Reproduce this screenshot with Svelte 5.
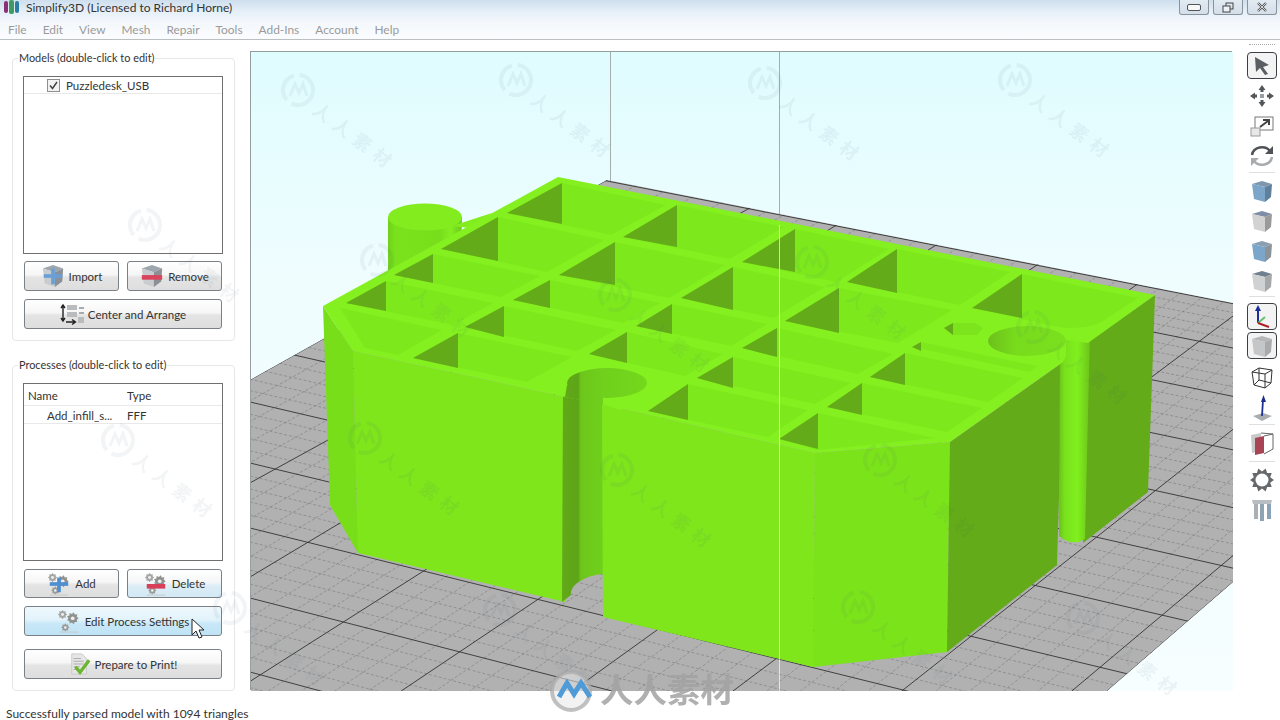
<script>
	const menus = ['File', 'Edit', 'View', 'Mesh', 'Repair', 'Tools', 'Add-Ins', 'Account', 'Help'];

	// floor grid, both families are straight lines in screen coordinates
	const yLeft = [111, 151, 195, 243, 291, 345, 402, 463, 528, 598, 672, 750];
	const yRight = [288, 332, 380, 433, 490, 550, 613, 680, 752, 830, 915, 1000];
	const fam = [[607, 180, -0.56], [328, 440, -0.55], [340, 523, -0.6], [422, 572, -0.636], [537, 600, -0.67], [657, 630, -0.72], [777, 658, -0.75], [903, 690, -0.79], [1073, 690, -0.84], [1107, 691, -0.865]];
	const xAt = (f, y) => f[0] + (y - f[1]) / f[2];

	const lerp = (a, b, t) => a + (b - a) * t;
	const majors = [];
	const minors = [];
	const yAt = (a, b, x) => a + (b - a) * (x - 250) / 903;
	yLeft.forEach((a, i) => {
		const b = yRight[i];
		majors.push([250, yAt(a, b, 250), 1233, yAt(a, b, 1233)]);
		if (i < yLeft.length - 1) {
			for (let k = 1; k < 5; k++) {
				const t = k / 5;
				const a2 = lerp(a, yLeft[i + 1], t);
				const b2 = lerp(b, yRight[i + 1], t);
				minors.push([250, yAt(a2, b2, 250), 1233, yAt(a2, b2, 1233)]);
			}
		}
	});
	fam.forEach((f, i) => {
		majors.push([xAt(f, 100), 100, xAt(f, 691), 691]);
		if (i < fam.length - 2) {
			const n = fam[i + 1];
			for (let k = 1; k < 5; k++) {
				const t = k / 5;
				minors.push([lerp(xAt(f, 100), xAt(n, 100), t), 100, lerp(xAt(f, 691), xAt(n, 691), t), 691]);
			}
		}
	});

	// pockets: left x, left y, top x, top y, bottom y of the dark wall, then the width vector
	const pockets = [
		[507, 213, 562, 183, 224, 104, 22], [623, 237, 677, 205, 247, 107, 22], [742, 262, 795, 229, 272, 94, 20], [847, 282, 897, 249, 293, 113, 23],
		[441, 249, 498, 217, 261, 106, 23], [559, 275, 615, 242, 285, 110, 23], [681, 298, 733, 267, 310, 92, 20], [785, 321, 839, 288, 333, 113, 22],
		[394, 275, 433, 254, 283, 107, 22], [513, 300, 550, 280, 308, 110, 23], [636, 326, 672, 304, 334, 95, 20], [742, 348, 777, 328, 357, 116, 26], [870, 377, 905, 353, 385, 118, 25],
		[346, 303, 386, 281, 311, 107, 22], [465, 327, 504, 306, 337, 112, 24], [589, 354, 627, 332, 363, 96, 22], [697, 378, 733, 357, 388, 118, 26], [827, 407, 862, 383, 415, 120, 25],
		[413, 358, 458, 333, 368, 114, 24], [648, 411, 688, 384, 420, 120, 26]
	];

	const marks = [
		[298, 90], [516, 80], [765, 83], [1015, 80], [145, 225], [377, 260], [615, 295], [812, 262], [1033, 327],
		[118, 440], [365, 438], [617, 470], [880, 460], [230, 608], [500, 610], [858, 607], [1083, 618]
	];

	function gear(cx, cy, r, teeth) {
		const pts = [];
		const step = Math.PI / teeth;
		for (let i = 0; i < teeth * 2; i++) {
			const rad = i % 2 ? r * 0.72 : r;
			pts.push((cx + Math.cos(i * step) * rad).toFixed(1) + ',' + (cy + Math.sin(i * step) * rad).toFixed(1));
		}
		return pts.join(' ');
	}
</script>

{#snippet cube(top, left, right)}
	<svg class="tool-icon" width="24" height="24" viewBox="0 0 24 24">
		<polygon points="2,5 12,2 22,5 15,8" fill={top} />
		<polygon points="2,5 15,8 15,23 4,20" fill={left} />
		<polygon points="15,8 22,5 21,18 15,23" fill={right} />
	</svg>
{/snippet}

{#snippet boxIcon(mark)}
	<svg width="24" height="26" viewBox="0 0 26 26">
		<polygon points="2,5 13,1 24,5 15,9" fill="#9ea6ad" />
		<polygon points="2,5 15,9 15,25 4,21" fill="#c9cdd0" />
		<polygon points="15,9 24,5 23,19 15,25" fill="#8b9096" />
		{#if mark === 'plus'}
			<rect x="3" y="11" width="20" height="4" fill="#6a9fd6" />
			<rect x="11" y="5" width="4" height="17" fill="#6a9fd6" />
		{:else}
			<rect x="2" y="12" width="22" height="5" fill="#d8455c" />
		{/if}
	</svg>
{/snippet}

{#snippet gears(mark)}
	<svg width="24" height="26" viewBox="0 0 26 26">
		<polygon points={gear(6, 6, 5, 8)} fill="#a3a5a3" />
		<circle cx="6" cy="6" r="1.6" fill="#eee" />
		<polygon points={gear(17, 10, 6.5, 9)} fill="#8f928f" />
		<circle cx="17" cy="10" r="2" fill="#eee" />
		<polygon points={gear(9, 20, 4.5, 8)} fill="#9a9c9a" />
		<circle cx="9" cy="20" r="1.4" fill="#eee" />
		<line x1="3" y1="25" x2="23" y2="25" stroke="#c4c8c4" />
		{#if mark === 'plus'}
			<rect x="3" y="11" width="20" height="4" fill="#4f8fd0" />
			<rect x="11" y="6" width="4" height="16" fill="#4f8fd0" />
		{:else if mark === 'minus'}
			<rect x="3" y="13" width="20" height="5" fill="#d8405a" />
		{/if}
	</svg>
{/snippet}

<div class="window">
	<header class="titlebar">
		<svg class="app-icon" width="18" height="14" viewBox="0 0 18 14">
			<rect x="1" y="1" width="4" height="12" rx="2" fill="#8b2f74" />
			<rect x="6" y="0" width="5" height="14" rx="2" fill="#3f9b62" />
			<rect x="12" y="1" width="4" height="12" rx="2" fill="#2c7da3" />
		</svg>
		<span class="title">Simplify3D (Licensed to Richard Horne)</span>
		<div class="controls">
			<button class="ctl"><span class="min"></span></button>
			<button class="ctl">
				<svg width="12" height="11" viewBox="0 0 12 11"><rect x="4" y="1" width="7" height="6" fill="none" stroke="#444" /><rect x="1" y="4" width="7" height="6" fill="#eef2f6" stroke="#444" /></svg>
			</button>
			<button class="ctl">
				<svg width="12" height="10" viewBox="0 0 12 10"><path d="M2 1l8 8M10 1l-8 8" stroke="#555" stroke-width="2.4" fill="none" /><path d="M2 1l8 8M10 1l-8 8" stroke="#f4f6f8" stroke-width="0.8" fill="none" /></svg>
			</button>
		</div>
	</header>
	<nav class="menubar">
		{#each menus as m}<span>{m}</span>{/each}
	</nav>

	<div class="main">
		<aside class="panel">
			<fieldset class="group">
				<legend>Models (double-click to edit)</legend>
				<div class="list">
					<div class="row model-row">
						<span class="check">
							<svg width="9" height="9" viewBox="0 0 9 9"><path d="M1 4.5l2.5 3L8 1" fill="none" stroke="#444" stroke-width="1.5" /></svg>
						</span>
						<span>Puzzledesk_USB</span>
					</div>
				</div>
				<div class="pair first">
					<button class="btn">{@render boxIcon('plus')}Import</button>
					<button class="btn">{@render boxIcon('minus')}Remove</button>
				</div>
				<button class="btn wide arrange">
					<svg width="24" height="24" viewBox="0 0 24 24">
						<path d="M3 3v16M1 6l2-3 2 3M1 16l2 3 2-3" fill="none" stroke="#222" stroke-width="1.4" />
						<rect x="7" y="3" width="10" height="5" fill="#b9bcbe" />
						<rect x="7" y="10" width="10" height="5" fill="#b9bcbe" />
						<rect x="19" y="5" width="5" height="2" fill="#a8abad" />
						<rect x="19" y="10" width="5" height="2" fill="#a8abad" />
						<rect x="18" y="15" width="6" height="6" fill="#b9bcbe" />
						<path d="M6 20h9M12 17.5l3.5 2.5-3.5 2.5" fill="none" stroke="#222" stroke-width="1.4" />
					</svg>
					Center and Arrange
				</button>
			</fieldset>

			<fieldset class="group second">
				<legend>Processes (double-click to edit)</legend>
				<div class="list">
					<div class="row head"><span class="c1">Name</span><span class="c2">Type</span></div>
					<div class="row item"><span class="c1 indent">Add_infill_s...</span><span class="c2">FFF</span></div>
				</div>
				<div class="pair low-pair">
					<button class="btn">{@render gears('plus')}Add</button>
					<button class="btn warm">{@render gears('minus')}Delete</button>
				</div>
				<button class="btn wide hot">{@render gears('')}Edit Process Settings</button>
				<button class="btn wide print">
					<svg width="22" height="26" viewBox="0 0 24 26">
						<polygon points="3,2 14,2 19,7 19,24 3,24" fill="#e6e6e6" stroke="#c8c8c8" />
						<path d="M5 7h8M5 10h11M5 13h11M5 16h7M5 19h6" stroke="#aaa" />
						<path d="M7 16l5 6L22 9" fill="none" stroke="#6cb52e" stroke-width="3.6" />
					</svg>
					Prepare to Print!
				</button>
			</fieldset>
		</aside>

		<div class="viewport">
			<svg width="982" height="639" viewBox="251 52 982 639">
				<defs>
					<linearGradient id="sky" x1="0" y1="0" x2="0" y2="1">
						<stop offset="0" stop-color="#dffcfe" />
						<stop offset="0.35" stop-color="#effdff" />
						<stop offset="1" stop-color="#f6feff" />
					</linearGradient>
					<clipPath id="plate">
						<polygon points="607,180 1233,303 1233,582 1107,691 250,691 250,380" />
					</clipPath>
					<linearGradient id="notch" gradientUnits="userSpaceOnUse" x1="556" y1="0" x2="648" y2="0">
						<stop offset="0" stop-color="#7ce41c" />
						<stop offset="0.06" stop-color="#62aa18" />
						<stop offset="0.24" stop-color="#5ea418" />
						<stop offset="0.27" stop-color="#6cc61b" />
						<stop offset="0.51" stop-color="#70d01c" />
						<stop offset="1" stop-color="#74d81c" />
					</linearGradient>
					<linearGradient id="post" gradientUnits="userSpaceOnUse" x1="388" y1="0" x2="462" y2="0">
						<stop offset="0" stop-color="#70d01b" />
						<stop offset="0.1" stop-color="#7ae21c" />
						<stop offset="0.7" stop-color="#78de1c" />
						<stop offset="0.85" stop-color="#84ee22" />
						<stop offset="1" stop-color="#6cc81c" />
					</linearGradient>
					<linearGradient id="hole" gradientUnits="userSpaceOnUse" x1="988" y1="0" x2="1067" y2="0">
						<stop offset="0" stop-color="#6cc01b" />
						<stop offset="0.35" stop-color="#78dc1c" />
						<stop offset="1" stop-color="#7ae01e" />
					</linearGradient>
					<linearGradient id="column" gradientUnits="userSpaceOnUse" x1="1058" y1="0" x2="1090" y2="0">
						<stop offset="0" stop-color="#68bc1a" />
						<stop offset="0.2" stop-color="#78e01c" />
						<stop offset="0.6" stop-color="#80f01e" />
						<stop offset="1" stop-color="#6cc41a" />
					</linearGradient>
				</defs>

				<rect x="250" y="52" width="983" height="639" fill="url(#sky)" />
				<line x1="610.5" y1="52" x2="610.5" y2="182" stroke="#a6adad" />
				<line x1="779.5" y1="52" x2="779.5" y2="225" stroke="#a6adad" />

				<polygon points="607,180 1233,303 1233,582 1107,691 250,691 250,380" fill="#b1b1b1" />
				<g clip-path="url(#plate)">
					{#each minors as l}
						<line x1={l[0]} y1={l[1]} x2={l[2]} y2={l[3]} class="minor" />
					{/each}
					{#each majors as l}
						<line x1={l[0]} y1={l[1]} x2={l[2]} y2={l[3]} class="major" />
					{/each}
				</g>

				<!-- post behind the part -->
				<polygon points="388,217 388,300 460,300 462,217" fill="url(#post)" />
				<ellipse cx="425" cy="217" rx="37" ry="13.5" fill="#82ec1f" />
				<polygon points="452,226 492,213 470,228" fill="#82ec1f" />

				<!-- side walls -->
				<polygon points="323,306 353,351 358,553 330,505" fill="#78de1a" />
				<polygon points="353,351 565,397 565,602 358,553" fill="#7ee61b" />
				<path d="M563 390H603V574Q588 575 577 583Q570 589 571 595L562 602Z" fill="url(#notch)" />
				<polygon points="602,404 815,453 813,667 603,617" fill="#7ee61b" />
				<polygon points="815,453 950,442 947,652 813,667" fill="#7be31a" />
				<polygon points="950,442 1063,362 1057,565 947,652" fill="#63ab18" />
				<polygon points="1088,342 1155,295 1148,492 1083,543" fill="#63ab18" />
				<path d="M1060 335L1090 332L1085 539Q1072 547 1059 536Z" fill="url(#column)" />

				<!-- top face -->
				<polygon points="323,306 558,177 1155,295 1088,343 1066,340 1066,356 1063,362 950,442 815,453 602,404 565,397 353,351" fill="#84f01f" />

				{#each pockets as p}
					<polygon points="{p[0]},{p[1]} {p[2]},{p[3]} {p[2] + p[5]},{p[3] + p[6]} {p[0] + p[5]},{p[1] + p[6]}" fill="#7de91d" />
				{/each}
				<path d="M972 308L1022 274L1138 298L1100 323Q1080 331 1052 326L1018 318Z" fill="#7de91d" />
				<polygon points="340,308 442,330 398,355 365,348" fill="#7de91d" />
				<polygon points="779,439 818,413 935,438 818,450" fill="#7de91d" />
				<polygon points="912,347 921,342 1037,366 1030,372" fill="#7de91d" />
				{#each pockets as p}
					<polygon points="{p[0]},{p[1]} {p[2]},{p[3]} {p[2]},{p[4]}" fill="#64ab19" />
				{/each}
				<polygon points="972,308 1022,274 1022,318" fill="#64ab19" />
				<polygon points="779,439 818,413 818,449" fill="#64ab19" />
				<polygon points="912,347 921,342 921,351" fill="#64ab19" />

				<ellipse cx="607" cy="383" rx="40" ry="15" fill="url(#notch)" />
				<path d="M567 385H603V405L565 397Z" fill="url(#notch)" />
				<path d="M603 404Q625 402 646 388L650 400L620 410Z" fill="#84f01f" />
				<polygon points="944,328 953,323 975,323 983,328 977,335 953,335" fill="#7ce41c" />
				<polygon points="944,328 953,323 953,335" fill="#64ab19" />
				<ellipse cx="1027" cy="341" rx="39" ry="15" fill="url(#hole)" />

				<line x1="779.5" y1="225" x2="779.5" y2="691" stroke="#fff" stroke-opacity="0.65" />
			</svg>
		</div>

		<div class="toolbar">
			<div class="grip"></div>
			<button class="tool on">
				<svg class="tool-icon" width="20" height="20" viewBox="0 0 20 20"><path d="M3 1L17 9L11 11L16 18L13 19L8 12L4 16Z" fill="#5a5e62" /></svg>
			</button>
			<button class="tool">
				<svg class="tool-icon" width="26" height="24" viewBox="0 0 26 24">
					<rect x="11" y="10" width="4" height="4" fill="#9b9fa3" />
					<path d="M13 1l3.5 5h-2v2h-3V6h-2zM13 23l3.5-5h-2v-2h-3v2h-2zM1 12l5-3.5v2h2v3H6v2zM25 12l-5-3.5v2h-2v3h2v2z" fill="#53575b" />
				</svg>
			</button>
			<button class="tool">
				<svg class="tool-icon" width="26" height="24" viewBox="0 0 26 24">
					<rect x="6" y="3" width="18" height="13" fill="#fff" stroke="#777" />
					<rect x="2" y="14" width="9" height="8" fill="#e8e8e8" stroke="#999" />
					<path d="M11 13l8-6m-5-1h6v5" fill="none" stroke="#444" stroke-width="2" />
				</svg>
			</button>
			<button class="tool">
				<svg class="tool-icon" width="26" height="24" viewBox="0 0 26 24">
					<path d="M3 11a10 9 0 0 1 18-4" fill="none" stroke="#4f5357" stroke-width="2.6" />
					<path d="M24 2v8h-8z" fill="#4f5357" />
					<path d="M23 13a10 9 0 0 1-18 4" fill="none" stroke="#a8acaf" stroke-width="2.6" />
					<path d="M2 22v-8h8z" fill="#a8acaf" />
				</svg>
			</button>
			<div class="sep s1"></div>
			<button class="tool">{@render cube('#7f97ad', '#7ba5c9', '#5f7f9b')}</button>
			<button class="tool">{@render cube('#7f8ea6', '#d2d2d2', '#9a9a9a')}</button>
			<button class="tool">{@render cube('#8b9fb2', '#7ba5c9', '#8c9297')}</button>
			<button class="tool">{@render cube('#70808f', '#cfd1d3', '#a5a7a9')}</button>
			<div class="sep s2"></div>
			<button class="tool on short">
				<svg class="tool-icon" width="22" height="24" viewBox="0 0 22 24">
					<path d="M7 3v15" stroke="#1a2ea0" stroke-width="2" />
					<path d="M7 0l3 6H4z" fill="#1a2ea0" />
					<path d="M7 18l7-6" stroke="#66c06a" stroke-width="2" />
					<path d="M7 18l11 4" stroke="#a82028" stroke-width="2" />
				</svg>
			</button>
			<button class="tool on short">{@render cube('#b5b7b9', '#c4c6c8', '#a8aaac')}</button>
			<button class="tool low">
				<svg class="tool-icon" width="24" height="24" viewBox="0 0 24 24" fill="none" stroke="#333" stroke-width="1">
					<path d="M2 6L9 2L22 4L21 17L15 22L4 19Z" />
					<path d="M2 6L15 8V22M15 8L22 4M9 2L9 14L4 19M9 14L21 17" />
				</svg>
			</button>
			<button class="tool">
				<svg class="tool-icon" width="24" height="28" viewBox="0 0 24 28">
					<polygon points="3,22 13,19 22,22 12,27" fill="#a9adb0" />
					<path d="M12 22L13 6" stroke="#1a2e92" stroke-width="1.8" />
					<path d="M13.5 1l2.5 7h-5z" fill="#1a2e92" />
				</svg>
			</button>
			<div class="sep s3"></div>
			<button class="tool sect">
				<svg class="tool-icon" width="26" height="26" viewBox="0 0 26 26">
					<polygon points="2,4 12,2 12,20 3,22" fill="#c9c9c9" />
					<polygon points="6,7 15,5 15,22 6,24" fill="#a84454" />
					<path d="M15 5L24 3V18L15 23M12 2L24 3" fill="none" stroke="#666" />
				</svg>
			</button>
			<div class="sep s4"></div>
			<button class="tool">
				<svg class="tool-icon" width="26" height="26" viewBox="0 0 26 26">
					<polygon points={gear(13, 13, 12, 10)} fill="#66696c" />
					<circle cx="13" cy="13" r="6.5" fill="#fff" />
				</svg>
			</button>
			<button class="tool">
				<svg class="tool-icon" width="26" height="24" viewBox="0 0 26 24">
					<polygon points="3,2 23,2 22,6 4,6" fill="#b9bec2" />
					<rect x="5" y="6" width="4" height="15" fill="#aab0b5" />
					<rect x="11" y="6" width="4" height="17" fill="#8ea4b4" />
					<rect x="18" y="6" width="4" height="15" fill="#8aa3b6" />
				</svg>
			</button>
		</div>
	</div>

	<footer class="status">Successfully parsed model with 1094 triangles</footer>

	<!-- watermark and pointer float over everything -->
	<svg class="overlay" width="1280" height="720" viewBox="0 0 1280 720">
		<g class="marks">
			{#each marks as m}
				<g transform="translate({m[0]} {m[1]})" opacity="0.07">
					<circle r="15" fill="none" stroke="#44607a" stroke-width="4" stroke-dasharray="30 6" />
					<path d="M-8 6L-3 -6L1 3L5 -6L9 6" fill="none" stroke="#44607a" stroke-width="3" />
					<text class="wm" transform="rotate(37)" x="24" y="10">人人素材</text>
				</g>
			{/each}
		</g>
		<circle cx="571" cy="691" r="19" fill="#e8e8e8" fill-opacity="0.55" stroke="#a8a8a8" stroke-width="4" stroke-opacity="0.7" />
		<path d="M559 697L567 683L574 694L581 683L590 697" fill="none" stroke="#4f9bd8" stroke-width="5" />
		<text class="brand" x="600" y="702">人人素材</text>
		<path d="M192 619V635L196 631L199 638L202 637L199 630H204Z" fill="#fff" stroke="#222" stroke-width="1" />
	</svg>
</div>

<style>
	:global(body) {
		background: #fff;
	}

	.window {
		position: relative;
		width: 1280px;
		height: 720px;
		overflow: hidden;
		display: flex;
		flex-direction: column;
		background: #fff;
		font-family: "Lato", "Liberation Sans", sans-serif;
		font-size: 11.5px;
		color: #333;
	}

	.titlebar {
		height: 20px;
		flex: none;
		display: flex;
		align-items: flex-start;
		background: linear-gradient(#cfdfee, #e6f0f8 60%, #f0f5fa);
	}

	.app-icon {
		margin: 0 5px 0 3px;
	}

	.title {
		line-height: 16px;
		font-size: 12px;
		color: #333;
	}

	.controls {
		margin-left: auto;
		margin-right: 3px;
		display: flex;
		gap: 4px;
	}

	.ctl {
		width: 30px;
		height: 15px;
		padding: 0;
		border: 1px solid #8a929a;
		border-top: 0;
		border-radius: 0 0 3px 3px;
		background: linear-gradient(#e2eaf2, #d4dfea);
		display: flex;
		align-items: center;
		justify-content: center;
	}

	.min {
		width: 12px;
		height: 5px;
		border: 1px solid #555;
		border-radius: 2px;
		background: #f6f8fa;
	}

	.menubar {
		height: 19px;
		flex: none;
		display: flex;
		gap: 16px;
		padding-left: 8px;
		align-items: center;
		background: linear-gradient(#f3f7fb, #fbfcfe);
		border-bottom: 1px solid #bcbfc2;
		color: #9a9a9a;
		font-size: 11.9px;
	}

	.main {
		flex: 1;
		display: flex;
		min-height: 0;
	}

	.panel {
		width: 251px;
		flex: none;
		padding: 11px 0 0 12px;
		box-sizing: border-box;
	}

	.group {
		width: 223px;
		box-sizing: border-box;
		margin: 0;
		padding: 11px 10px 11px 10px;
		border: 1px solid #e7e7e7;
		border-radius: 4px;
		display: block;
	}

	.group.second {
		margin-top: 17px;
	}

	legend {
		padding: 0 1px;
		margin-left: -5px;
		line-height: 14px;
		height: 14px;
		font-size: 10.9px;
	}

	.list {
		width: 200px;
		height: 178px;
		box-sizing: border-box;
		border: 1px solid #707070;
	}

	.row {
		display: flex;
		align-items: center;
		height: 18px;
		box-sizing: border-box;
		border-bottom: 1px solid #e9e9e9;
	}

	.item {
		padding-top: 1px;
	}

	.model-row {
		height: 17px;
		padding-left: 23px;
		gap: 6px;
	}

	.check {
		width: 13px;
		height: 13px;
		box-sizing: border-box;
		border: 1px solid #8f8f8f;
		background: #f2f2f2;
		display: flex;
		align-items: center;
		justify-content: center;
	}

	.head {
		height: 22px;
		padding-top: 1px;
	}

	.c1 {
		width: 103px;
		padding-left: 4px;
		box-sizing: border-box;
	}

	.indent {
		padding-left: 23px;
	}

	.pair {
		display: flex;
		gap: 8px;
		margin: 8px 0 7px 1px;
	}

	.pair.first {
		margin-top: 7px;
		margin-bottom: 8px;
	}

	.pair.low-pair {
		margin-bottom: 8px;
	}

	.low-pair .btn {
		height: 29px;
	}

	.btn {
		width: 95px;
		height: 30px;
		padding: 0;
		box-sizing: border-box;
		border: 1px solid #7b8086;
		border-radius: 3px;
		background: linear-gradient(#fff, #f6f6f6 45%, #e4e4e4 55%, #dedede);
		font: inherit;
		color: #333;
		display: flex;
		align-items: center;
		justify-content: center;
		gap: 4px;
	}

	.wide {
		width: 198px;
		margin-left: 1px;
	}

	.warm {
		background: linear-gradient(#fff, #f4f6f7 45%, #dbedf6 60%, #d3e9f5);
	}

	.hot {
		background: linear-gradient(#eef8fd, #e2f3fb 45%, #c8e8f8 60%, #bfe3f6);
	}

	.print {
		margin-top: 13px;
	}

	.viewport {
		margin-top: 12px;
		width: 982px;
		height: 639px;
		flex: none;
		box-shadow: -1px -1px 0 #959d9f;
		overflow: hidden;
	}

	.viewport svg {
		display: block;
	}

	.minor {
		stroke: #7b7b7b;
		stroke-width: 0.6;
		stroke-dasharray: 3 2;
	}

	.major {
		stroke: #333;
		stroke-width: 0.9;
	}

	.toolbar {
		width: 47px;
		flex: none;
		box-sizing: border-box;
		padding-left: 11px;
		display: flex;
		flex-direction: column;
		align-items: center;
	}

	.grip {
		width: 26px;
		height: 0;
		margin: 4px 0 7px;
		border-top: 1px dotted #aaa;
	}

	.tool {
		width: 30px;
		height: 30px;
		flex: none;
		padding: 0;
		box-sizing: border-box;
		border: 1px solid transparent;
		border-radius: 4px;
		background: none;
		display: flex;
		align-items: center;
		justify-content: center;
	}

	.tool.on {
		height: 27px;
		margin-bottom: 2px;
		border: 1.5px solid #3c4044;
		background: #f3f3f3;
	}

	.low {
		margin-top: 2px;
	}

	.sect {
		margin-top: 4px;
	}

	.sep {
		width: 26px;
		height: 1px;
		flex: none;
		background: #dfdfdf;
	}

	.s1 {
		margin: 1px 0 3px;
	}

	.s2 {
		margin: 0 0 6px;
	}

	.s3 {
		margin: 1px 0 0;
	}

	.s4 {
		margin: 2px 0 3px;
	}

	.status {
		height: 20px;
		flex: none;
		padding: 7px 0 0 6px;
		box-sizing: border-box;
		line-height: 13px;
		white-space: nowrap;
		font-size: 12px;
	}

	.overlay {
		position: absolute;
		left: 0;
		top: 0;
		pointer-events: none;
	}

	.marks {
		filter: blur(0.6px);
	}

	.wm {
		font-family: "Noto Sans CJK SC", sans-serif;
		font-size: 18px;
		font-weight: 700;
		letter-spacing: 7px;
		fill: #44607a;
	}

	.brand {
		font-family: "Noto Sans CJK SC", sans-serif;
		font-size: 33.5px;
		font-weight: 700;
		fill: #a2a2a2;
		fill-opacity: 0.85;
	}
</style>
